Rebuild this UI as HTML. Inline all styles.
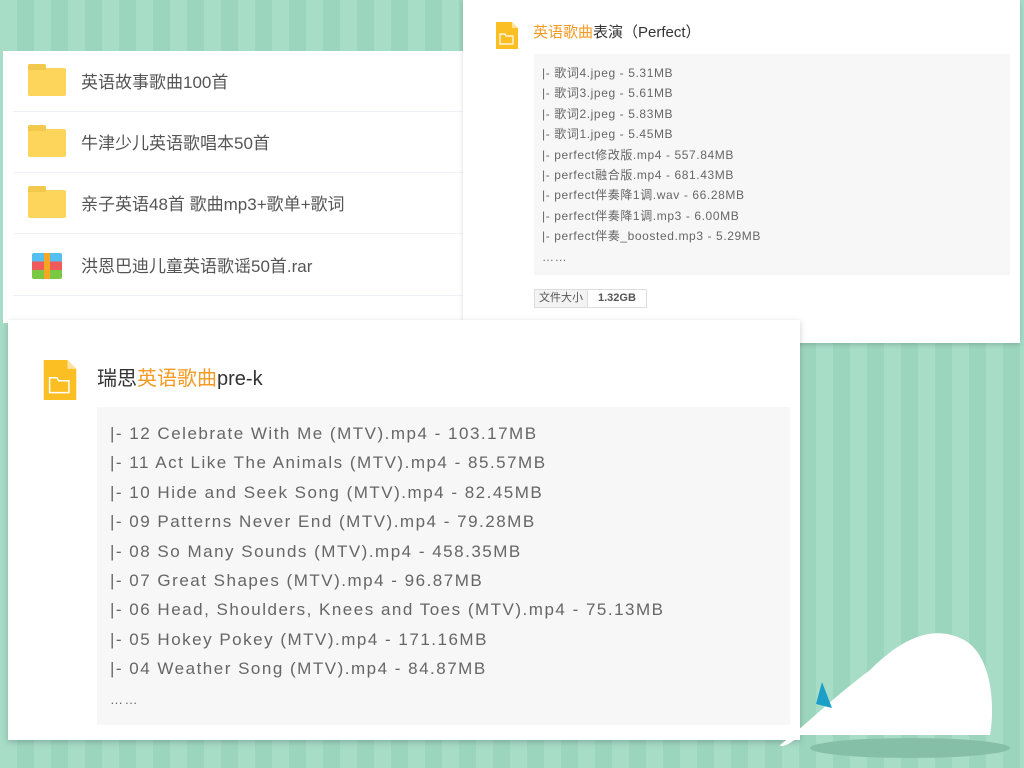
<!DOCTYPE html>
<html><head><meta charset="utf-8"><style>
*{margin:0;padding:0;box-sizing:border-box}
body{width:1024px;height:768px;overflow:hidden;position:relative;font-family:"Liberation Sans","Noto Sans CJK SC",sans-serif;
background:repeating-linear-gradient(90deg,#a7dcc7 0 17px,#9cd5be 17px 34px);}
.card{position:absolute;background:#fff}
.l{left:3px;top:51px;width:460px;height:272px}
.row{position:absolute;left:10px;width:450px;height:61px;border-bottom:1px solid #eef1f5;}
.row .ic{position:absolute;left:15px;top:17px;width:38px;height:28px;background:#fcd55a;border-radius:2px}
.row .ic:before{content:"";position:absolute;left:0;top:-4px;width:18px;height:6px;background:#f2c94c;border-radius:2px 2px 0 0}
.row span{position:absolute;left:68px;top:17px;font-size:17px;color:#555}
.r{left:463px;top:0;width:557px;height:343px;box-shadow:0 2px 4px rgba(0,0,0,.15)}
.o{color:#f59a23}
.g1{position:absolute;left:71px;top:54px;width:476px;height:221px;background:#f7f7f7;padding:9px 0 0 8px;font-size:12px;color:#666;line-height:20.4px;letter-spacing:.6px}
.b{left:8px;top:320px;width:792px;height:420px;box-shadow:0 2px 6px rgba(0,0,0,.2)}
.g2{position:absolute;left:89px;top:87px;width:693px;height:318px;background:#f7f7f7;padding:12px 0 0 13px;font-size:17px;color:#666;line-height:29.4px;letter-spacing:1.5px}
</style></head><body>
<div class="card l">
<div class="row" style="top:0"><div class="ic"></div><span>英语故事歌曲100首</span></div>
<div class="row" style="top:61px"><div class="ic"></div><span>牛津少儿英语歌唱本50首</span></div>
<div class="row" style="top:122px"><div class="ic"></div><span>亲子英语48首 歌曲mp3+歌单+歌词</span></div>
<div class="row" style="top:184px"><div style="position:absolute;left:19px;top:18px;width:30px;height:26px;border-radius:2px;background:linear-gradient(#55c0f0 0 33%,#f05a5a 33% 66%,#7ac943 66%)"><div style="position:absolute;left:12px;top:0;width:6px;height:26px;background:#f5a623"></div></div><span>洪恩巴迪儿童英语歌谣50首.rar</span></div>
</div>
<div class="card r">
<svg style="position:absolute;left:33px;top:22px" width="22" height="27" viewBox="0 0 22 27"><path d="M0 0H16L22 6V27H0Z" fill="#fbbf24"/><path d="M16 0V6H22" fill="#fde2a0"/><path d="M4 12h5l1 2h7v8H4z" fill="none" stroke="#fff" stroke-width="1.2"/></svg>
<div style="position:absolute;left:70px;top:21px;font-size:15px;color:#333"><span class="o">英语歌曲</span>表演（Perfect）</div>
<div class="g1">|- 歌词4.jpeg - 5.31MB<br>|- 歌词3.jpeg - 5.61MB<br>|- 歌词2.jpeg - 5.83MB<br>|- 歌词1.jpeg - 5.45MB<br>|- perfect修改版.mp4 - 557.84MB<br>|- perfect融合版.mp4 - 681.43MB<br>|- perfect伴奏降1调.wav - 66.28MB<br>|- perfect伴奏降1调.mp3 - 6.00MB<br>|- perfect伴奏_boosted.mp3 - 5.29MB<br>……</div>
<div style="position:absolute;left:71px;top:289px;height:19px;border:1px solid #ddd;font-size:11px;color:#555;display:flex;line-height:17px"><span style="padding:0 4px;background:#f3f3f3">文件大小</span><span style="padding:0 10px;border-left:1px solid #ddd;font-weight:bold">1.32GB</span></div>
</div>
<div class="card b">
<svg style="position:absolute;left:35px;top:40px" width="34" height="40" viewBox="0 0 22 27"><path d="M0 0H16L22 6V27H0Z" fill="#fbbf24"/><path d="M16 0V6H22" fill="#fde2a0"/><path d="M4 12h5l1 2h7v8H4z" fill="none" stroke="#fff" stroke-width="1"/></svg>
<div style="position:absolute;left:89px;top:42px;font-size:20px;color:#333">瑞思<span class="o">英语歌曲</span>pre-k</div>
<div class="g2">|- 12 Celebrate With Me (MTV).mp4 - 103.17MB<br>|- 11 Act Like The Animals (MTV).mp4 - 85.57MB<br>|- 10 Hide and Seek Song (MTV).mp4 - 82.45MB<br>|- 09 Patterns Never End (MTV).mp4 - 79.28MB<br>|- 08 So Many Sounds (MTV).mp4 - 458.35MB<br>|- 07 Great Shapes (MTV).mp4 - 96.87MB<br>|- 06 Head, Shoulders, Knees and Toes (MTV).mp4 - 75.13MB<br>|- 05 Hokey Pokey (MTV).mp4 - 171.16MB<br>|- 04 Weather Song (MTV).mp4 - 84.87MB<br><span style="font-size:13px">……</span></div>
</div>
<svg style="position:absolute;left:760px;top:620px" width="264" height="148" viewBox="0 0 264 148"><ellipse cx="150" cy="128" rx="100" ry="10" fill="#86bfa8"/><path d="M20 125C40 110 70 80 110 50C140 20 170 5 200 18C230 30 236 80 230 115H40C30 125 20 128 20 125Z" fill="#fff"/><path d="M62 62L72 88L56 84Z" fill="#1a9fc9"/></svg>
</body></html>
